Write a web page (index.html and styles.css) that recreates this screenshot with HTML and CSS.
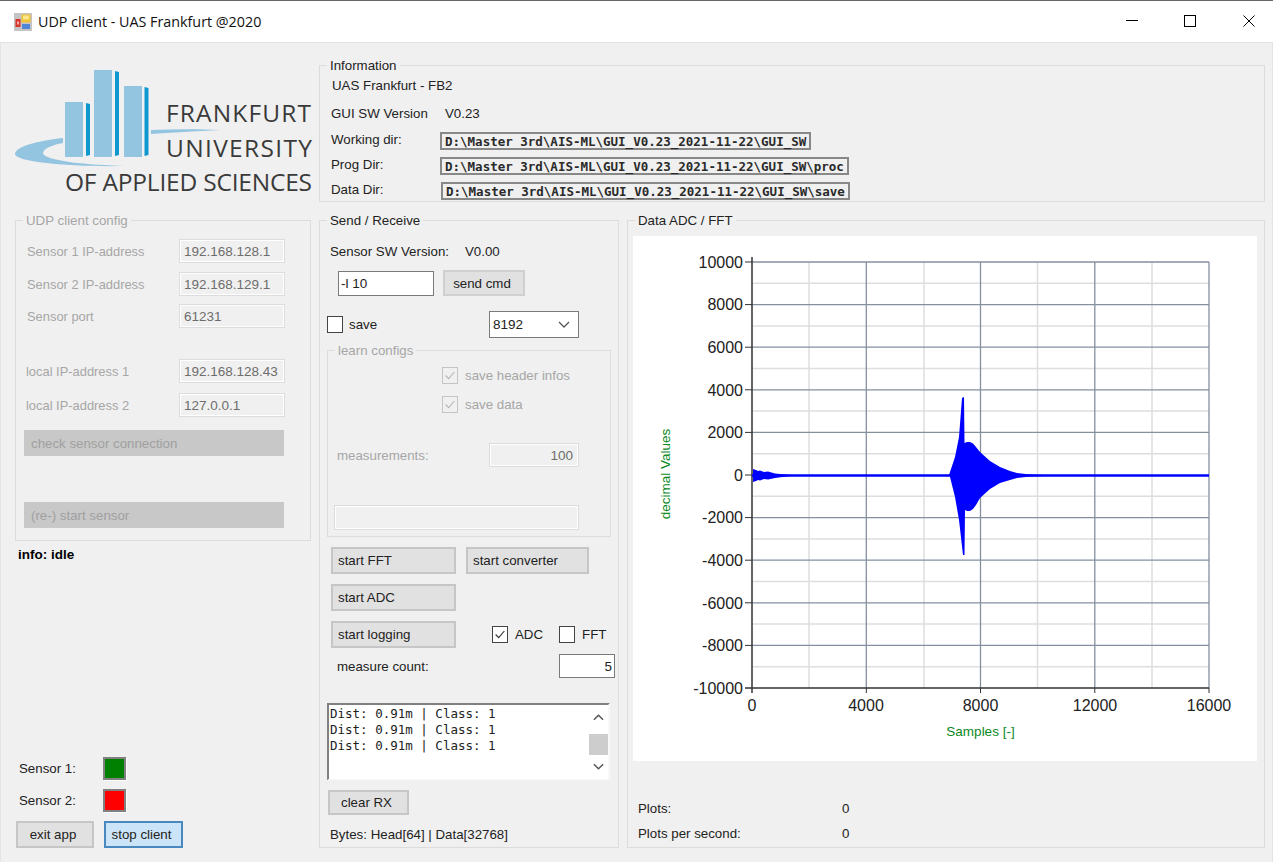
FILE: index.html
```html
<!DOCTYPE html>
<html lang="en">
<head>
  <meta charset="UTF-8" />
  <title>UDP client - UAS Frankfurt @2020</title>
  <link rel="stylesheet" href="styles.css">
</head>

<body>
  <!-- Title bar -->
  <header class="titlebar">
    <svg class="app-icon" viewBox="0 0 18 18" width="18" height="18">
      <rect width="18" height="18" fill="#c4c4c4"/>
      <rect x="1.5" y="6" width="5" height="8" fill="#d8322c"/>
      <rect x="3" y="8.5" width="2" height="3" fill="#f7b0a8"/>
      <rect x="7.5" y="1.5" width="9" height="8" fill="#f2c230"/>
      <rect x="9" y="2.5" width="6" height="4" fill="#fbe68c"/>
      <rect x="8" y="11" width="8" height="5" fill="#4f86d8"/>
    </svg>
    <span class="title-text">UDP client - UAS Frankfurt @2020</span>
    <div class="win-buttons">
      <svg viewBox="0 0 12 12" width="12" height="12"><path d="M0 5.5H12" stroke="#000" fill="none"/></svg>
      <svg class="win-max" viewBox="0 0 12 12" width="12" height="12"><rect x="0.5" y="0.5" width="11" height="11" stroke="#000" fill="none"/></svg>
      <svg viewBox="0 0 12 12" width="12" height="12"><path d="M0.5 0.5L11.5 11.5M11.5 0.5L0.5 11.5" stroke="#000" fill="none"/></svg>
    </div>
  </header>

  <main class="app">
    <!-- Left column -->
    <div class="col-left">
      <svg class="logo" viewBox="15 68 299 132" width="299" height="132">
        <path class="swoosh" d="M63 138 C36 141 15 147 15 154 C15 162 70 167 125 166 C90 165 43 161 43 153 C43 149 52 145 63 143 Z"/>
        <path class="swoosh" d="M151 130 C175 129 200 129 220 130 C195 131 170 133 151 134 Z"/>
        <rect class="block" x="65" y="102" width="18" height="55"/>
        <rect class="block" x="94" y="70" width="18" height="87"/>
        <rect class="block" x="124" y="86" width="18" height="71"/>
        <path class="stripe" d="M86 103 L90 104 V155 L86 156 Z"/>
        <path class="stripe" d="M115 71 L119 72 V155 L115 156 Z"/>
        <path class="stripe" d="M144.500 87 L148.500 88 V155 L144.500 156 Z"/>
        <text class="logo-text" x="166" y="122" textLength="145">FRANKFURT</text>
        <text class="logo-text" x="166" y="157" textLength="146">UNIVERSITY</text>
        <text class="logo-text" x="65" y="191" textLength="247">OF APPLIED SCIENCES</text>
      </svg>

      <section class="group udp-group">
        <span class="group-title off">UDP client config</span>
        <div class="field mt18"><label>Sensor 1 IP-address</label><div class="input off-input">192.168.128.1</div></div>
        <div class="field mt9"><label>Sensor 2 IP-address</label><div class="input off-input">192.168.129.1</div></div>
        <div class="field mt8"><label>Sensor port</label><div class="input off-input">61231</div></div>
        <div class="field mt31"><label class="nudge">local IP-address 1</label><div class="input off-input">192.168.128.43</div></div>
        <div class="field mt10"><label class="nudge">local IP-address 2</label><div class="input off-input">127.0.0.1</div></div>
        <button class="btn btn-off mt13">check sensor connection</button>
        <button class="btn btn-off mt46">(re-) start sensor</button>
      </section>

      <p class="info">info: idle</p>

      <div class="status-area">
        <div class="sensor"><span class="sensor-name">Sensor 1:</span><span class="led led-green"></span></div>
        <div class="sensor mt9"><span class="sensor-name">Sensor 2:</span><span class="led led-red"></span></div>
        <div class="app-buttons">
          <button class="btn exit-btn">exit app</button>
          <button class="btn stop-btn">stop client</button>
        </div>
      </div>
    </div>

    <!-- Right side -->
    <div class="col-right">
      <section class="group info-group">
        <span class="group-title">Information</span>
        <div class="line uas">UAS Frankfurt - FB2</div>
        <div class="line mt8"><span class="gui-label">GUI SW Version</span><span>V0.23</span></div>
        <div class="dir-row mt9"><span class="dir-label">Working dir:</span><span class="dir-box">D:\Master 3rd\AIS-ML\GUI_V0.23_2021-11-22\GUI_SW</span></div>
        <div class="dir-row mt7"><span class="dir-label">Prog Dir:</span><span class="dir-box wide">D:\Master 3rd\AIS-ML\GUI_V0.23_2021-11-22\GUI_SW\proc</span></div>
        <div class="dir-row mt7"><span class="dir-label data-label">Data Dir:</span><span class="dir-box wide">D:\Master 3rd\AIS-ML\GUI_V0.23_2021-11-22\GUI_SW\save</span></div>
      </section>

      <div class="lower">
        <section class="group send-group">
          <span class="group-title">Send / Receive</span>
          <div class="line sw-line"><span class="sw-label">Sensor SW Version:</span><span>V0.00</span></div>

          <div class="cmd-row">
            <div class="input cmd-input">-l 10</div>
            <button class="btn cmd-btn">send cmd</button>
          </div>

          <div class="save-row">
            <span class="check"></span>
            <span class="save-label">save</span>
            <div class="select">8192
              <svg viewBox="0 0 12 7" width="12" height="7"><path d="M1 1L6 6L11 1" stroke="#555" stroke-width="1.300" fill="none"/></svg>
            </div>
          </div>

          <div class="group learn-group">
            <span class="group-title off">learn configs</span>
            <div class="learn-check first">
              <span class="check check-off"><svg viewBox="0 0 16 16"><path d="M3 8L6.500 11.500L13 4" stroke="#b5b5b5" stroke-width="1.300" fill="none"/></svg></span>
              <span class="off">save header infos</span>
            </div>
            <div class="learn-check second">
              <span class="check check-off"><svg viewBox="0 0 16 16"><path d="M3 8L6.500 11.500L13 4" stroke="#b5b5b5" stroke-width="1.300" fill="none"/></svg></span>
              <span class="off">save data</span>
            </div>
            <div class="measure-row">
              <span class="off">measurements:</span>
              <div class="input off-input right-text">100</div>
            </div>
            <div class="input off-input progress"></div>
          </div>

          <div class="btn-row mt10">
            <button class="btn start-btn">start FFT</button>
            <button class="btn conv-btn">start converter</button>
          </div>
          <div class="btn-row adc-row">
            <button class="btn start-btn">start ADC</button>
          </div>
          <div class="btn-row log-row">
            <button class="btn start-btn">start logging</button>
            <span class="check adc-check"><svg viewBox="0 0 16 16"><path d="M3 8L6.500 11.500L13 4" stroke="#333" stroke-width="1.300" fill="none"/></svg></span>
            <span class="check-text">ADC</span>
            <span class="check fft-check"></span>
            <span class="check-text">FFT</span>
          </div>
          <div class="count-row">
            <span class="count-label">measure count:</span>
            <div class="input count-input right-text">5</div>
          </div>

          <div class="log">
            <div class="log-text">Dist: 0.91m | Class: 1<br>Dist: 0.91m | Class: 1<br>Dist: 0.91m | Class: 1</div>
            <div class="scrollbar">
              <svg viewBox="0 0 12 7" width="11" height="7"><path d="M1 6L6 1L11 6" stroke="#555" stroke-width="1.600" fill="none"/></svg>
              <span class="thumb"></span>
              <svg viewBox="0 0 12 7" width="11" height="7"><path d="M1 1L6 6L11 1" stroke="#555" stroke-width="1.600" fill="none"/></svg>
            </div>
          </div>

          <button class="btn clear-btn">clear RX</button>
          <div class="line bytes">Bytes: Head[64] | Data[32768]</div>
        </section>

        <section class="group data-group">
          <span class="group-title">Data ADC / FFT</span>
          <svg class="chart" viewBox="633 236 624 525" width="624" height="525">
            <path class="grid-minor" d="M752 283.300H1209M752 325.900H1209M752 368.500H1209M752 411.100H1209M752 453.700H1209M752 496.300H1209M752 538.900H1209M752 581.500H1209M752 624.100H1209M752 666.700H1209M809 262V688M924 262V688M1037.500 262V688M1152 262V688"/>
            <path class="grid-major" d="M752 262H1209M752 304.600H1209M752 347.200H1209M752 389.800H1209M752 432.400H1209M752 517.600H1209M752 560.200H1209M752 602.800H1209M752 645.400H1209M866.300 262V688M980.500 262V688M1094.800 262V688M1209 262V688"/>
            <path class="axis" d="M752 257V693M745 688H1209"/>
            <path class="tick" d="M745 262H752M745 304.600H752M745 347.200H752M745 389.800H752M745 432.400H752M745 475H752M745 517.600H752M745 560.200H752M745 602.800H752M745 645.400H752M866.300 688V693M980.500 688V693M1094.800 688V693M1209 688V693"/>
            <path class="wave-line" d="M752 475.500H1209"/>
            <path class="wave" d="M753 469 L756 470 L758 471 L760 470.500 L764 472 L768 471.500 L775 473.500 L790 475 L790 476 L775 478 L768 479.500 L764 479 L760 480.500 L758 480 L756 481 L753 482 Z"/>
            <path class="wave" d="M949 475 L955 457 L959 437 L962 398 L964 397 L964.500 443 L967 442 L970 442 L973 443.500 L976 447 L980 452 L990 461 L1000 467 L1010 471 L1017 473 L1030 474.500 L1043 475 L1043 476 L1030 476.500 L1017 478 L1010 480 L1000 483 L990 489 L980 498 L976 505 L973 509 L970 511 L967 511 L965 510 L964.500 555 L963 555 L959 520 L955 497 L950 477 Z"/>
            <text class="tick-y" x="743" y="267.500">10000</text>
            <text class="tick-y" x="743" y="310">8000</text>
            <text class="tick-y" x="743" y="352.500">6000</text>
            <text class="tick-y" x="743" y="395.500">4000</text>
            <text class="tick-y" x="743" y="438">2000</text>
            <text class="tick-y" x="743" y="480.500">0</text>
            <text class="tick-y" x="743" y="523">-2000</text>
            <text class="tick-y" x="743" y="566">-4000</text>
            <text class="tick-y" x="743" y="608.500">-6000</text>
            <text class="tick-y" x="743" y="651">-8000</text>
            <text class="tick-y" x="743" y="693.500">-10000</text>
            <text class="tick-x" x="752" y="711">0</text>
            <text class="tick-x" x="866" y="711">4000</text>
            <text class="tick-x" x="980.500" y="711">8000</text>
            <text class="tick-x" x="1095" y="711">12000</text>
            <text class="tick-x" x="1209" y="711">16000</text>
            <text class="axis-title" x="980.500" y="736">Samples [-]</text>
            <text class="axis-title" transform="translate(670 474) rotate(-90)">decimal Values</text>
          </svg>
          <div class="line plots mt37"><span class="plots-label">Plots:</span><span>0</span></div>
          <div class="line plots mt5"><span class="plots-label">Plots per second:</span><span>0</span></div>
        </section>
      </div>
    </div>
  </main>
</body>
</html>
```

FILE: styles.css
```css
* {
  box-sizing: border-box;
}

html, body {
  margin: 0;
  padding: 0;
}

body {
  width: 1273px;
  height: 862px;
  overflow: hidden;
  background: #f0f0f0;
  box-shadow: inset 1px 0 #e4e4e4, inset -1px 0 #e4e4e4;
  font-family: "Liberation Sans", Arial, sans-serif;
  font-size: 13.3px;
  color: #222;
}

/* title bar */
.titlebar {
  display: flex;
  align-items: center;
  height: 43px;
  padding-left: 14px;
  background: #fff;
  border-top: 1px solid #666;
  border-bottom: 1px solid #e2e2e2;
}

.app-icon {
  margin-right: 6px;
}

.title-text {
  font-family: "Open Sans", sans-serif;
  font-size: 14.300px;
  color: #111;
}

.win-buttons {
  display: flex;
  gap: 46px;
  margin-left: auto;
  margin-right: 18px;
  margin-bottom: 2px;
}

.win-max {
  margin-right: 1px;
}

/* main layout */
.app {
  display: flex;
  gap: 8px;
  padding-left: 15px;
}

.col-left {
  width: 296px;
  display: flex;
  flex-direction: column;
  height: 805px;
}

.col-right {
  width: 946px;
}

.logo {
  display: block;
  margin-top: 25px;
}

.swoosh { fill: #93c4e0; }
.block { fill: #93c4e0; }
.stripe { fill: #0f97d0; }

.logo-text {
  font-family: "Open Sans", sans-serif;
  font-weight: 400;
  font-size: 24.500px;
  fill: #3a3a3a;
}

/* group boxes */
.group {
  position: relative;
  border: 1px solid #dcdcdc;
}

.group-title {
  position: absolute;
  top: -8px;
  left: 7px;
  padding: 0 3px;
  background: #f0f0f0;
  line-height: 16px;
}

.off {
  color: #a6a6a6;
}

.udp-group {
  height: 321px;
  margin-top: 20px;
  padding-left: 8px;
}

.field {
  display: flex;
  align-items: center;
  height: 24px;
}

.field label {
  width: 155px;
  padding-left: 3px;
  font-size: 12.900px;
  color: #a6a6a6;
}

.field label.nudge {
  padding-left: 2px;
}

.input {
  display: flex;
  align-items: center;
  padding: 0 4px;
  background: #fff;
  border: 1px solid #7a7a7a;
  color: #222;
  white-space: nowrap;
}

.off-input {
  background: #f0f0f0;
  border: 2px solid #fff;
  outline: 1px solid #dcdcdc;
  outline-offset: -1px;
  color: #6d6d6d;
}

.field .input {
  width: 106px;
  height: 24px;
  padding: 0 3px;
  font-size: 13.500px;
}

.right-text {
  justify-content: flex-end;
}

/* buttons */
.btn {
  display: block;
  padding: 0 0 0 5px;
  font: inherit;
  text-align: left;
  color: #222;
  background: #e1e1e1;
  border: 2px solid #c6c6c6;
}

.btn-off {
  width: 260px;
  height: 26px;
  padding-left: 7px;
  color: #a0a0a0;
  background: #c8c8c8;
  border: 0;
}

.info {
  margin: 6px 0 0 3px;
  font-size: 13.500px;
  font-weight: bold;
  color: #000;
  line-height: 16px;
}

.status-area {
  margin-top: auto;
  margin-left: 1px;
}

.sensor {
  display: flex;
  align-items: center;
  height: 23px;
}

.sensor-name {
  width: 87px;
  padding-left: 3px;
}

.led {
  width: 23px;
  height: 23px;
  border: 2px solid #808080;
  box-shadow: 1px 1px 0 #fff;
}

.led-green { background: #008000; }
.led-red { background: #ff0000; }

.app-buttons {
  display: flex;
  gap: 10px;
  margin-top: 9px;
}

.exit-btn,
.stop-btn {
  height: 27px;
  padding: 0 4px 0 0;
  text-align: center;
}

.exit-btn { width: 78px; }

.stop-btn {
  width: 79px;
  background: #cce4f7;
  border: 2px solid #4a88c0;
}

/* information box */
.info-group {
  height: 137px;
  margin-top: 22px;
}

.line {
  display: flex;
  align-items: center;
  height: 20px;
  margin-left: 11px;
}

.uas {
  margin-top: 9px;
  margin-left: 12px;
}

.gui-label {
  width: 114px;
}

.dir-row {
  display: flex;
  align-items: center;
  height: 18px;
  margin-left: 11px;
}

.dir-label {
  width: 109px;
  padding-bottom: 3px;
}

.data-label {
  width: 110px;
}

.dir-box {
  display: flex;
  align-items: center;
  width: 371px;
  height: 18px;
  padding-left: 3px;
  border: 2px solid #888;
  font-family: "DejaVu Sans Mono", monospace;
  font-size: 12.500px;
  font-weight: bold;
  white-space: nowrap;
  color: #2a2a2a;
}

.dir-box.wide {
  width: 409px;
}

.lower {
  display: flex;
  gap: 8px;
  margin-top: 18px;
}

/* send / receive */
.send-group {
  width: 300px;
  height: 628px;
}

.sw-line {
  margin-top: 20px;
  margin-left: 10px;
}

.sw-label {
  width: 135px;
}

.cmd-row {
  display: flex;
  align-items: flex-start;
  gap: 9px;
  height: 26px;
  margin: 9px 0 0 18px;
}

.cmd-input {
  width: 96px;
  height: 25px;
  margin-top: 1px;
  padding: 0 2px;
  font-size: 13.500px;
}

.cmd-btn {
  width: 82px;
  height: 26px;
  padding: 0 4px 0 0;
  text-align: center;
  border-color: #d0d0d0;
}

.save-row {
  display: flex;
  align-items: center;
  height: 27px;
  margin: 15px 0 0 7px;
}

.check {
  display: block;
  flex: none;
  width: 16px;
  height: 17px;
  background: #fff;
  border: 1px solid #444;
}

.check svg {
  display: block;
  width: 100%;
  height: 100%;
}

.check-off {
  background: #f0f0f0;
  border: 1px solid #c4c4c4;
}

.save-label {
  width: 140px;
  margin-left: 6px;
}

.select {
  display: flex;
  align-items: center;
  justify-content: space-between;
  width: 90px;
  height: 27px;
  padding: 0 8px 0 3px;
  background: #fff;
  border: 1px solid #7a7a7a;
  font-size: 13.500px;
}

.learn-group {
  width: 284px;
  height: 187px;
  margin: 12px 0 0 7px;
}

.learn-check {
  display: flex;
  align-items: center;
  gap: 7px;
  height: 17px;
  margin-left: 114px;
}

.learn-check.first { margin-top: 16px; }
.learn-check.second { margin-top: 12px; }

.measure-row {
  display: flex;
  align-items: center;
  justify-content: space-between;
  width: 242px;
  height: 24px;
  margin: 30px 0 0 9px;
}

.measure-row .input {
  width: 90px;
  height: 24px;
  font-size: 13.500px;
}

.progress {
  width: 245px;
  height: 25px;
  margin: 38px 0 0 6px;
}

.btn-row {
  display: flex;
  align-items: center;
  margin-left: 11px;
}

.start-btn {
  width: 125px;
  height: 27px;
}

.conv-btn {
  width: 123px;
  height: 27px;
  margin-left: 10px;
}

.adc-row { margin-top: 10px; height: 26px; }
.log-row { margin-top: 11px; height: 26px; }

.adc-check { margin-left: 36px; }
.fft-check { margin-left: 16px; }

.check-text {
  margin-left: 7px;
}

.count-row {
  display: flex;
  align-items: center;
  height: 24px;
  margin: 7px 0 0 17px;
}

.count-label {
  width: 222px;
}

.count-input {
  width: 56px;
  height: 24px;
  padding: 0 2px;
  font-size: 13.500px;
}

.log {
  display: flex;
  width: 283px;
  height: 77px;
  margin: 25px 0 0 7px;
  background: #fff;
  border-style: solid;
  border-width: 2px 2px 1px 2px;
  border-color: #808080 #f8f8f8 #f8f8f8 #808080;
}

.log-text {
  flex: 1;
  padding-top: 1px;
  padding-left: 1px;
  font-family: "DejaVu Sans Mono", monospace;
  font-size: 12.500px;
  line-height: 16px;
}

.scrollbar {
  display: flex;
  flex-direction: column;
  align-items: center;
  width: 19px;
  padding-top: 9px;
}

.thumb {
  width: 19px;
  height: 21px;
  margin: 13px 0 8px;
  background: #cdcdcd;
}

.clear-btn {
  width: 81px;
  height: 25px;
  margin: 10px 0 0 8px;
  padding: 0 4px 0 0;
  text-align: center;
}

.bytes {
  margin-top: 9px;
  margin-left: 10px;
}

/* chart */
.data-group {
  width: 638px;
  height: 628px;
}

.chart {
  display: block;
  margin: 15px 0 0 5px;
  background: #fff;
}

.grid-minor {
  stroke: #dedede;
  stroke-width: 1.500;
  fill: none;
}

.grid-major {
  stroke: #84909e;
  stroke-width: 1.300;
  fill: none;
}

.axis {
  stroke: #333;
  stroke-width: 1.500;
  fill: none;
}

.tick {
  stroke: #333;
  stroke-width: 1;
  fill: none;
}

.wave-line {
  stroke: #0000ff;
  stroke-width: 2.500;
  fill: none;
}

.wave {
  fill: #0000ff;
}

.tick-y,
.tick-x {
  font-size: 16px;
  fill: #222;
}

.tick-y {
  text-anchor: end;
}

.tick-x {
  text-anchor: middle;
}

.axis-title {
  font-size: 13.500px;
  fill: #0a8a1e;
  text-anchor: middle;
}

.plots {
  margin-left: 10px;
}

.plots-label {
  width: 204px;
}

/* spacing helpers */
.mt5 { margin-top: 5px; }
.mt7 { margin-top: 7px; }
.mt8 { margin-top: 8px; }
.mt9 { margin-top: 9px; }
.mt10 { margin-top: 10px; }
.mt13 { margin-top: 13px; }
.mt18 { margin-top: 18px; }
.mt31 { margin-top: 31px; }
.mt37 { margin-top: 37px; }
.mt46 { margin-top: 46px; }
```
